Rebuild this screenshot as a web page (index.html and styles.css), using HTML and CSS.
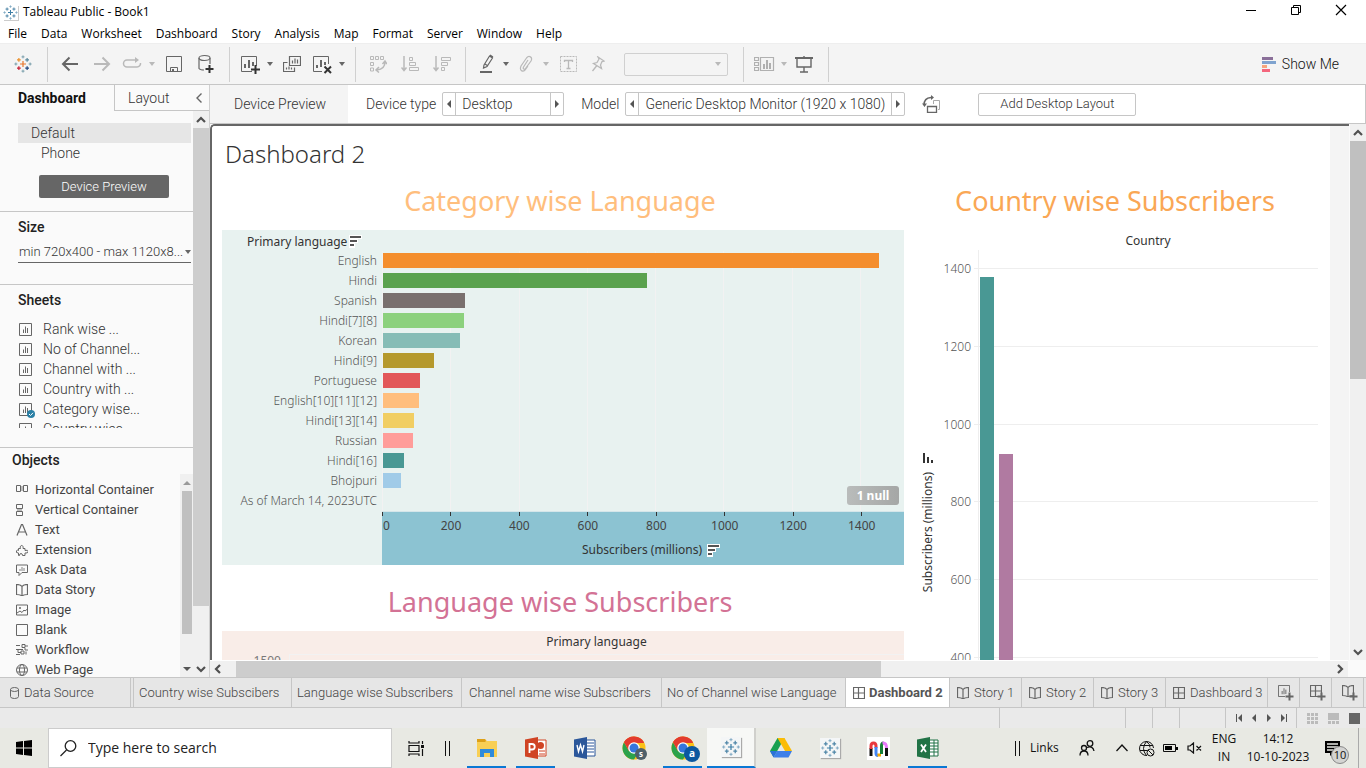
FILE: index.html
```html
<!DOCTYPE html>
<html lang="en">
<head>
<meta charset="utf-8">
<title>Tableau Public - Book1</title>
<link rel="stylesheet" href="styles.css">
</head>
<body>
<svg class="defs" aria-hidden="true">
  <symbol id="marks" viewBox="0 0 24 24">
    <g fill="none" stroke-width="1.6">
      <path class="m1" d="M12 8v8M8 12h8"/>
      <path class="m2" d="M6.500 4v5M4 6.500h5"/>
      <path class="m3" d="M17.500 4v5M15 6.500h5"/>
      <path class="m4" d="M6.500 15v5M4 17.500h5"/>
      <path class="m5" d="M17.500 15v5M15 17.500h5"/>
      <path class="m6" stroke-width="1.200" d="M12 0.500v4M10 2.500h4M12 19.500v4M10 21.500h4"/>
      <path class="m7" stroke-width="1.200" d="M2.500 10v4M0.500 12h4M21.500 10v4M19.500 12h4"/>
    </g>
  </symbol>
  <symbol id="sheet" viewBox="0 0 13 13"><path d="M.5.5h12v12H.500zM4.500 10V6.500M6.500 10V3.500M8.500 10V5" fill="none" stroke="currentColor"/></symbol>
  <symbol id="book" viewBox="0 0 12 12"><path d="M6 2.500C5 1 3 .5.500.500v10C3 10.500 5 11 6 12c1-1 3-1.500 5.500-1.500v-10C9 .5 7 1 6 2.500zM6 2.500V12" fill="none" stroke="currentColor" stroke-width="1.200"/></symbol>
  <symbol id="dash" viewBox="0 0 12 12"><path d="M.5.5h11v11H.500zM5.500.500v11M.5 6h11" fill="none" stroke="currentColor" stroke-width="1.200"/></symbol>
  <symbol id="sort" viewBox="0 0 13 13"><path d="M0 0h13v4H9v4H6v5H0z" fill="#fff"/><path d="M1 1h11v2H1zM1 5h7v2H1zM1 9h4v2H1z" fill="#555"/></symbol>
  <symbol id="chrome" viewBox="0 0 24 24">
    <circle cx="12" cy="12" r="11.500" fill="#fbc116"/><path d="M2 6.300A11.500 11.500 0 0 1 22 6.500L12 7z" fill="#e33b2e"/>
    <path d="M2 6.300A11.500 11.500 0 0 0 12 23.500l5-8.500-10 0z" fill="#2ba24c"/><path d="M2 6.300l5 8.700 5-8h10l-.3-.700A11.500 11.500 0 0 0 2 6.300z" fill="#e33b2e"/>
    <circle cx="12" cy="12" r="5.800" fill="#fff"/><circle cx="12" cy="12" r="4.500" fill="#3576dd"/>
  </symbol>
  <symbol id="up" viewBox="0 0 10 10"><path d="M1 7l4-4 4 4" fill="none" stroke="currentColor" stroke-width="2.200"/></symbol>
</svg>

<header class="titlebar">
  <svg class="app-logo blue" width="15" height="15"><use href="#marks"/></svg>
  <span class="app-name">Tableau Public - Book1</span>
  <div class="window-buttons">
    <button aria-label="Minimize"><svg width="12" height="12"><path d="M1 6.500h10" stroke="#000"/></svg></button>
    <button aria-label="Restore"><svg width="12" height="12" fill="none" stroke="#000"><path d="M1.500 3.500h7v7h-7zM3.500 3.500v-2h7v7h-2"/></svg></button>
    <button aria-label="Close"><svg width="12" height="12"><path d="M1 1l10 10M11 1L1 11" stroke="#000" stroke-width="1.200"/></svg></button>
  </div>
</header>
<nav class="menubar">
  <button>File</button><button>Data</button><button>Worksheet</button><button>Dashboard</button><button>Story</button><button>Analysis</button><button>Map</button><button>Format</button><button>Server</button><button>Window</button><button>Help</button>
</nav>

<div class="toolbar">
  <button class="tool logo-tool" aria-label="Start page"><svg class="multi" width="18" height="18"><use href="#marks"/></svg></button>
  <span class="rule"></span>
  <button class="tool wide" aria-label="Undo"><svg width="18" height="16" fill="none" stroke="#666" stroke-width="2"><path d="M17 8H2M8.500 1.500L2 8l6.500 6.500"/></svg></button>
  <button class="tool wide" aria-label="Redo"><svg width="18" height="16" fill="none" stroke="#b9b9b9" stroke-width="2"><path d="M1 8h15M9.500 1.500L16 8l-6.500 6.500"/></svg></button>
  <button class="tool" aria-label="Replay"><svg width="20" height="14" fill="none" stroke="#b9b9b9" stroke-width="1.500"><path d="M14 3H5a3.500 3.500 0 0 0 0 7h10a3.500 3.500 0 0 0 3.500-4"/><path d="M13 0l4 3-4 3z" fill="#b9b9b9" stroke="none"/></svg></button>
  <button class="caret pale" aria-label="Replay options"></button>
  <button class="tool wide" aria-label="Save"><svg width="16" height="16" fill="none" stroke="#666"><path d="M.5.500h15v15H.500zM4.500 15.500v-4h7v4"/><path d="M6 13h2v3H6z" fill="#666" stroke="none"/></svg></button>
  <button class="tool wide" aria-label="New data source"><svg width="16" height="20" fill="none" stroke="#666" stroke-width="1.200"><ellipse cx="6.500" cy="4" rx="5.500" ry="2.500"/><path d="M1 4v10.500q1 1.500 5 1.500M12 4v6"/><path d="M11.500 11v8M7.500 15h8" stroke="#333" stroke-width="2"/></svg></button>
  <span class="rule"></span>
  <button class="tool" aria-label="New worksheet"><svg width="20" height="20" fill="none" stroke="#666"><path d="M12 17.500H1.500v-15h15V12"/><path d="M5 14v-4M9 14V6M13 12V8" stroke-width="2"/><path d="M15.500 11v9M11 15.500h9" stroke="#333" stroke-width="2"/></svg></button>
  <button class="caret" aria-label="New options"></button>
  <button class="tool wide" aria-label="Duplicate"><svg width="18" height="18" fill="none" stroke="#666"><path d="M6.500 1.500h11v9h-11zM9.500 8.500v-3M12 8.500v-5M14.500 8.500v-4M4.500 7.500h-4v9h11v-4M3.500 14.500v-2M6 14.500v-3M8.500 14.500v-2" stroke-width="1.200"/></svg></button>
  <button class="tool" aria-label="Clear sheet"><svg width="20" height="20" fill="none" stroke="#666"><path d="M10 17.500H1.500v-15h15V10"/><path d="M5 14v-3M9 13V6M13 11V8" stroke-width="2"/><path d="M12.500 12.500l6.500 6.500M19 12.500l-6.500 6.500" stroke="#333" stroke-width="2"/></svg></button>
  <button class="caret" aria-label="Clear options"></button>
  <span class="rule"></span>
  <button class="tool wide" aria-label="Swap"><svg width="18" height="18" fill="none" stroke="#b9b9b9"><path d="M1.500 1.500h3v3h-3zM6.500 1.500h3v3h-3zM11.500 1.500h3v3h-3zM1.500 7.500h3v3h-3zM1.500 13h3v3h-3z"/><path d="M16 7q0 7-8 8M13.500 9L16 6l2 3M10 12l-3 3 3 2.500" stroke-width="1.500"/></svg></button>
  <button class="tool wide" aria-label="Sort ascending"><svg width="18" height="18" fill="none" stroke="#b9b9b9"><path d="M3 1v14M.5 12.500L3 15.500l2.500-3" stroke-width="1.500"/><path d="M8.500 2.500h3v3h-3zM8.500 7.500h6v3h-6zM8.500 12.500h9v3h-9z"/></svg></button>
  <button class="tool wide" aria-label="Sort descending"><svg width="18" height="18" fill="none" stroke="#b9b9b9"><path d="M3 1v14M.5 12.500L3 15.500l2.500-3" stroke-width="1.500"/><path d="M8.500 2.500h9v3h-9zM8.500 7.500h6v3h-6zM8.500 12.500h3v3h-3z"/></svg></button>
  <span class="rule"></span>
  <button class="tool" aria-label="Highlight"><svg width="16" height="20" fill="none" stroke="#666"><path d="M6 11L11.500 2l3 2L9 12.500l-3.500 1.500zM7 10l3 2M12 1l3 2" stroke-width="1.200"/><path d="M2 18h12" stroke-width="2"/></svg></button>
  <button class="caret" aria-label="Highlight options"></button>
  <button class="tool" aria-label="Group members"><svg width="16" height="18" fill="none" stroke="#b9b9b9" stroke-width="1.200"><path d="M10 5l-4.500 7c-1 2 1 3 2 1.500L13 6c2-4-2-6-4.500-3L3 11c-2 5 2 6 4 4l3-4"/></svg></button>
  <button class="caret pale" aria-label="Group options"></button>
  <button class="tool wide" aria-label="Show labels"><svg width="17" height="16" fill="none" stroke="#b9b9b9"><path d="M.5.500h16v15H.500z" stroke-dasharray="2 1"/><path d="M4.500 6V4.500h8V6M8.500 4.500v8M6.500 12.500h4" stroke-width="1.300"/></svg></button>
  <button class="tool" aria-label="Fix axes"><svg width="14" height="16" fill="none" stroke="#b9b9b9" stroke-width="1.300"><path d="M7 1l6 4-2 .5L9.500 9l1 3.500-8-5L6 6.500 8 3zM5.500 10l-4 5"/></svg></button>
  <div class="fit"><select aria-label="Fit" disabled><option></option></select></div>
  <span class="rule after-fit"></span>
  <button class="tool" aria-label="Show cards"><svg width="21" height="14" fill="none" stroke="#b0b0b0"><path d="M.5.500h4v3h-4zM.5 5.500h4v3h-4zM.5 10.500h4v3h-4zM6.500.500h13v13h-13z" stroke-width="1.200"/><path d="M10 12V7M13 12V3M16 12V6" stroke-width="2"/></svg></button>
  <button class="caret pale" aria-label="Card options"></button>
  <button class="tool" aria-label="Presentation"><svg width="18" height="17" fill="none" stroke="#666"><path d="M0 2h18" stroke-width="2"/><path d="M2 2v9h14V2M9 0v1M9 11v5M5 16h8" stroke-width="1.400"/></svg></button>
  <span class="rule last"></span>
  <button class="show-me"><svg width="14" height="15"><path fill="#8a6f99" d="M0 0h11v3H0z"/><path fill="#7fa3cf" d="M0 4h14v3H0z"/><path fill="#f5a57e" d="M0 8h5v3H0z"/><path fill="#f4667d" d="M0 12h8v3H0z"/></svg>Show Me</button>
</div>

<main class="workspace">
  <aside class="side">
    <div class="side-tabs">
      <button class="side-tab current">Dashboard</button>
      <button class="side-tab">Layout<svg width="8" height="12" fill="none" stroke="#666" stroke-width="1.400"><path d="M6.500 1.500L2 6l4.500 4.500"/></svg></button>
    </div>
    <div class="side-body">
      <div class="side-content">
        <section class="devices">
          <button class="device chosen">Default</button>
          <button class="device phone">Phone</button>
          <button class="preview-button">Device Preview</button>
        </section>
        <section class="size">
          <h2><label for="size">Size</label></h2>
          <select id="size"><option>min 720x400 - max 1120x8...</option></select>
        </section>
        <section class="sheets">
          <h2>Sheets</h2>
          <ul>
            <li><svg><use href="#sheet"/></svg>Rank wise ...</li>
            <li><svg><use href="#sheet"/></svg>No of Channel...</li>
            <li><svg><use href="#sheet"/></svg>Channel with ...</li>
            <li><svg><use href="#sheet"/></svg>Country with ...</li>
            <li class="used"><svg><use href="#sheet"/></svg><svg class="tick" viewBox="0 0 8 8"><circle cx="4" cy="4" r="4" fill="#2a7fa5"/><path d="M2 4l1.500 1.500L6 2.800" fill="none" stroke="#fff"/></svg>Category wise...</li>
            <li><svg><use href="#sheet"/></svg>Country wise...</li>
          </ul>
        </section>
        <section class="objects">
          <h2>Objects</h2>
          <div class="object-area">
            <ul>
              <li><svg viewBox="0 0 12 12"><path d="M.5 1.500h4v6h-4zM7.500 1.500h4v6h-4z" fill="none" stroke="#666"/><path d="M5 2h2v5H5z" fill="#bbb"/></svg>Horizontal Container</li>
              <li><svg viewBox="0 0 12 12"><path d="M.5.500h6v4h-6zM.5 7.500h6v4h-6z" fill="none" stroke="#666"/><path d="M1 5h5v2H1z" fill="#bbb"/></svg>Vertical Container</li>
              <li><svg viewBox="0 0 12 12"><path d="M1 11.500L5.500.500h1L11 11.500M3 8h6" fill="none" stroke="#666" stroke-width="1.200"/></svg>Text</li>
              <li><svg viewBox="0 0 12 12"><path d="M2.500 4.500h2C3 1 8 0 7 4.500h2v2q3-1 3 1T9 9v2.500H6.500q0-2-1.500-2t-1.500 2h-1V9Q-.5 9 .5 7t2-.5z" fill="none" stroke="#666"/></svg>Extension</li>
              <li><svg viewBox="0 0 12 12"><path d="M.5 1h11v7.500H6l-3 3v-3H.500z" fill="none" stroke="#666"/><path d="M4 7V5M6 7V3M8 7V4" stroke="#aaa" stroke-width="1.500"/></svg>Ask Data</li>
              <li><svg><use href="#book"/></svg>Data Story</li>
              <li><svg viewBox="0 0 12 12"><path d="M.5 1h11v10H.500zM1 9l3-2 2 1.500L8 6l1 1 2.500-2" fill="none" stroke="#666"/><circle cx="4" cy="4" r="1" fill="#666"/></svg>Image</li>
              <li><svg viewBox="0 0 12 12"><path d="M.5.500h11v11H.500z" fill="none" stroke="#666"/></svg>Blank</li>
              <li><svg viewBox="0 0 12 12"><path d="M0 1.500h4M6 .5h3v3H6zM9 2h3M0 5.500h7M9 4v2h3M2 5.500v3h3M5 7h3v3H5zM10 7.500v3M0 10.500h4" fill="none" stroke="#666"/></svg>Workflow</li>
              <li><svg viewBox="0 0 12 12"><g fill="none" stroke="#666"><circle cx="6" cy="6" r="5.500"/><ellipse cx="6" cy="6" rx="2.500" ry="5.500"/><path d="M1 4h10M1 8h10"/></g></svg>Web Page</li>
            </ul>
            <div class="mini-scroll"><i class="tri up"></i><span></span><i class="tri down"></i></div>
          </div>
        </section>
      </div>
      <div class="vscroll side-scroll"><svg><use href="#up"/></svg><span></span><svg class="flip"><use href="#up"/></svg></div>
    </div>
  </aside>

  <div class="stage">
    <div class="device-bar">
      <span class="device-title">Device Preview</span>
      <label for="device-type">Device type</label>
      <div class="stepper short"><button aria-label="Previous type"><i class="tri left"></i></button><select id="device-type"><option>Desktop</option></select><button aria-label="Next type"><i class="tri right"></i></button></div>
      <label for="model">Model</label>
      <div class="stepper long"><button aria-label="Previous model"><i class="tri left"></i></button><select id="model"><option>Generic Desktop Monitor (1920 x 1080)</option></select><button aria-label="Next model"><i class="tri right"></i></button></div>
      <button class="rotate" aria-label="Rotate"><svg width="18" height="18" fill="none" stroke="#666"><path d="M2 10q0-7 7-7.500" stroke-width="1.500"/><path d="M9 0l3 2.500L9 5zM0 8.500h5L2.500 12z" fill="#666" stroke="none"/><path d="M5.500 11.500h9v6h-9z" stroke-width="1.300"/><path d="M11.500 9V5.500h6v9H16" stroke="#aaa"/></svg></button>
      <button class="add-layout">Add Desktop Layout</button>
    </div>

    <div class="canvas-row">
      <div class="canvas">
        <div class="dashboard">
          <h1>Dashboard 2</h1>
          <div class="dash-grid">
            <div class="left-column">
              <h2 class="viz-title peach">Category wise Language</h2>
              <div class="category-chart">
                <div class="field-name">Primary language <svg width="13" height="13"><use href="#sort"/></svg></div>
                <div class="rows">
                  <div class="names"><span>English</span><span>Hindi</span><span>Spanish</span><span>Hindi[7][8]</span><span>Korean</span><span>Hindi[9]</span><span>Portuguese</span><span>English[10][11][12]</span><span>Hindi[13][14]</span><span>Russian</span><span>Hindi[16]</span><span>Bhojpuri</span><span>As of March 14, 2023UTC</span></div>
                  <div class="bars">
                    <i style="width:95.2%;background:#f48e2d"></i><i style="width:50.6%;background:#5aa24e"></i><i style="width:15.8%;background:#79706e"></i><i style="width:15.6%;background:#8cd17d"></i><i style="width:14.8%;background:#86bcb6"></i><i style="width:9.8%;background:#b5992d"></i><i style="width:7.1%;background:#e25759"></i><i style="width:7%;background:#ffbe7d"></i><i style="width:6%;background:#f1ce63"></i><i style="width:5.800%;background:#ff9d9a"></i><i style="width:4.100%;background:#499894"></i><i style="width:3.500%;background:#a0cbe8"></i>
                    <button class="null-badge">1 null</button>
                  </div>
                </div>
                <div class="axis">
                  <div class="ticks"><span>0</span><span>200</span><span>400</span><span>600</span><span>800</span><span>1000</span><span>1200</span><span>1400</span></div>
                  <div class="axis-name">Subscribers (millions) <svg width="13" height="13"><use href="#sort"/></svg></div>
                </div>
              </div>
              <h2 class="viz-title pink">Language wise Subscribers</h2>
              <div class="language-chart">
                <div class="language-field">Primary language</div>
                <div class="language-plot"><span>1500</span><i></i></div>
              </div>
            </div>
            <div class="right-column">
              <h2 class="viz-title orange">Country wise Subscribers</h2>
              <div class="country-chart">
                <div class="vertical-name"><span>Subscribers (millions)</span><svg width="11" height="11"><path d="M0 0h2v10H0zM4 4h2v6H4zM8 7h2v3H8z" fill="#333"/></svg></div>
                <div class="country-body">
                  <div class="country-name">Country</div>
                  <div class="country-plot">
                    <div class="levels"><span>1400</span><span>1200</span><span>1000</span><span>800</span><span>600</span><span>400</span></div>
                    <div class="columns"><div class="lines"><i></i><i></i><i></i><i></i><i></i><i></i></div><b class="india"></b><b class="usa"></b></div>
                  </div>
                </div>
              </div>
            </div>
          </div>
        </div>
      </div>
      <div class="vscroll page-scroll"><svg><use href="#up"/></svg><span></span><svg class="flip"><use href="#up"/></svg></div>
    </div>
    <div class="hscroll"><svg class="ccw"><use href="#up"/></svg><span></span><svg class="cw"><use href="#up"/></svg></div>
  </div>
</main>

<nav class="sheet-tabs">
  <button class="source"><svg width="9" height="12" fill="none" stroke="#666"><ellipse cx="4.500" cy="2.500" rx="4" ry="2"/><path d="M.5 2.500v7q0 2 4 2t4-2v-7"/></svg>Data Source</button>
  <button class="t1">Country wise Subscibers</button><button class="t2">Language wise Subscribers</button><button class="t3">Channel name wise Subscribers</button><button class="t4">No of Channel wise Language</button>
  <button class="active"><svg width="12" height="12"><use href="#dash"/></svg>Dashboard 2</button>
  <button class="story"><svg width="12" height="12"><use href="#book"/></svg>Story 1</button><button class="story"><svg width="12" height="12"><use href="#book"/></svg>Story 2</button><button class="story"><svg width="12" height="12"><use href="#book"/></svg>Story 3</button>
  <button class="d3"><svg width="12" height="12"><use href="#dash"/></svg>Dashboard 3</button>
  <button class="new" aria-label="New worksheet"><svg width="16" height="16"><use href="#sheet" width="12" height="12"/><path d="M7 11h9M11.500 7v9" stroke="#e6e6e6" stroke-width="4"/><path d="M7.500 11.500h8M11.500 7.500v8" stroke="#666" stroke-width="2"/></svg></button>
  <button class="new" aria-label="New dashboard"><svg width="16" height="16"><use href="#dash" width="12" height="12"/><path d="M7.500 11.500h8M11.500 7.500v8" stroke="#666" stroke-width="2"/></svg></button>
  <button class="new" aria-label="New story"><svg width="16" height="16"><use href="#book" width="12" height="12"/><path d="M7.500 11.500h8M11.500 7.500v8" stroke="#666" stroke-width="2"/></svg></button>
</nav>
<div class="statusbar">
  <span class="cell c1"></span><span class="cell c4"></span><span class="cell c2"></span><span class="cell c2"></span><span class="cell c3"></span>
  <div class="cell pager">
    <button aria-label="First"><svg width="8" height="8" fill="#555"><path d="M1 0h1v8H1zM7 0v8L3 4z"/></svg></button><button aria-label="Previous"><svg width="8" height="8" fill="#555"><path d="M6 0v8L2 4z"/></svg></button><button aria-label="Next"><svg width="8" height="8" fill="#555"><path d="M2 0v8l4-4z"/></svg></button><button aria-label="Last"><svg width="8" height="8" fill="#555"><path d="M6 0h1v8H6zM1 0v8l4-4z"/></svg></button>
  </div>
  <div class="views">
    <button aria-label="Grid view"><svg width="11" height="11" fill="#bbb"><path d="M0 0h3v3H0zM4 0h3v3H4zM8 0h3v3H8zM0 4h3v3H0zM4 4h3v3H4zM8 4h3v3H8zM0 8h3v3H0zM4 8h3v3H4zM8 8h3v3H8z"/></svg></button><button aria-label="Filmstrip"><svg width="11" height="11" fill="#bbb"><path d="M0 0h11v7H0zM0 8h3v3H0zM4 8h3v3H4zM8 8h3v3H8z"/></svg></button><button aria-label="Tabs"><svg width="11" height="11"><path d="M0 0h11v11H0z" fill="#666"/></svg></button>
  </div>
</div>

<footer class="taskbar">
  <button class="start" aria-label="Start"><svg width="16" height="16"><path d="M0 2l7-1v6.500H0zM8 1l8-1v7.500H8zM0 8.500h7V15l-7-1zM8 8.500h8V16l-8-1z"/></svg></button>
  <div class="search"><svg width="17" height="17" fill="none" stroke="#222" stroke-width="1.300"><circle cx="10.500" cy="6" r="5.300"/><path d="M6.500 10L.5 16"/></svg><input type="text" aria-label="Search" value="Type here to search"></div>
  <button class="task-view" aria-label="Task view"><svg width="17" height="15" fill="none" stroke="#111" stroke-width="1.200"><path d="M1 0v2h10V0M1 4.500h10v6H1zM1 15v-2h10v2M14.500 0v3M14.500 8v7"/><path d="M13 4h3v3h-3z" fill="#111" stroke="none"/></svg></button>
  <i class="grip"></i>
  <div class="apps">
    <button class="app running" aria-label="File Explorer"><svg width="22" height="20"><path d="M1 1h8l2 2h10v16H1z" fill="#f8cf55"/><path d="M1 1h8l1 2-1 1H1z" fill="#dda018"/><path d="M4 11h14v8h-4v-4H8v4H4z" fill="#2f8bdb"/></svg></button>
    <button class="app running" aria-label="PowerPoint"><svg width="22" height="22"><path d="M12 3h9v16h-9z" fill="#fff" stroke="#d04424"/><path d="M14 14h6M14 17h6" stroke="#d04424"/><circle cx="15.500" cy="8.500" r="3.500" fill="#d04424"/><path d="M0 2.500L13 0v22L0 19.500z" fill="#d04424"/><path d="M4.500 16V7h2.500a2.500 2.500 0 0 1 0 5.500H5" fill="none" stroke="#fff" stroke-width="1.800"/></svg></button>
    <button class="app" aria-label="Word"><svg width="22" height="22"><path d="M12 3h9v16h-9z" fill="#fff" stroke="#2b579a"/><path d="M13 6h7M13 9h7M13 12h7M13 15h7" stroke="#2b579a"/><path d="M0 2.500L13 0v22L0 19.500z" fill="#2b579a"/><path d="M3 8l1.500 6.500L6.500 8l2 6.500L10 8" fill="none" stroke="#fff" stroke-width="1.400"/></svg></button>
    <button class="app" aria-label="Chrome"><svg width="24" height="24"><use href="#chrome"/></svg><span class="profile gray">s</span></button>
    <button class="app running" aria-label="Chrome"><svg width="24" height="24"><use href="#chrome"/></svg><span class="profile navy">a</span></button>
    <button class="app front" aria-label="Tableau"><svg class="tile blue" viewBox="-1 -1 26 26"><use href="#marks" width="24" height="24"/></svg></button>
    <button class="app" aria-label="Drive"><svg width="22" height="20"><path d="M7.500 0h7L7.500 12.500 3.500 19 0 13z" fill="#18a050"/><path d="M7.500 0h7L22 13h-7z" fill="#fbbc05"/><path d="M0 13h7l-3.500 6.500z" fill="#2b72d8"/><path d="M7 13h15l-3.500 6.500h-15z" fill="#3d7fe8"/></svg></button>
    <button class="app" aria-label="Tableau"><svg class="tile blue" viewBox="-1 -1 26 26"><use href="#marks" width="24" height="24"/></svg></button>
    <button class="app" aria-label="Magnet"><svg width="23" height="23"><path d="M0 0h23v23H0z" fill="#fff"/><g fill="none" stroke-width="3"><path d="M4 19V11" stroke="#111"/><path d="M4 12V9q0-3 2.500-3T9 9v2" stroke="#e8383f"/><path d="M9 10v6q0 2.500 2 2.500" stroke="#4285f4"/><path d="M10.500 18h3.500" stroke="#f9ab00"/><path d="M14.500 17V9q0-3 2-3" stroke="#188038"/><path d="M15.500 6q4-.5 4 5" stroke="#e879f9"/><path d="M19.500 11v8" stroke="#111"/></g></svg></button>
    <button class="app running" aria-label="Excel"><svg width="22" height="22"><path d="M12 3h9v16h-9z" fill="#fff" stroke="#217346"/><path d="M13 6h8M13 9h8M13 12h8M13 15h8M17 3v16" stroke="#217346"/><path d="M0 2.500L13 0v22L0 19.500z" fill="#217346"/><path d="M4 7.500l5 7.500M9 7.500L4 15" stroke="#fff" stroke-width="1.800"/></svg></button>
  </div>
  <div class="tray">
    <i class="grip"></i><span class="links">Links</span>
    <button class="t-people" aria-label="People"><svg width="16" height="16" fill="none" stroke="#111" stroke-width="1.300"><circle cx="11" cy="3.500" r="2.800"/><circle cx="5" cy="8" r="2.500"/><path d="M1 15.500q0-4.500 4-4.500t4 4.500M8 7.500q6-2 7 3.500"/></svg></button>
    <button aria-label="Hidden icons"><svg width="12" height="8" fill="none" stroke="#111" stroke-width="1.300"><path d="M.5 7L6 1l5.500 6"/></svg></button>
    <button aria-label="Network"><svg width="17" height="17" fill="none" stroke="#111"><path d="M9 15.500A7 7 0 1 1 15.500 8M8.500 1.500q-6 7 0 14M8.500 1.500q4 3 3.500 6M2 5.500h13M2 10.500h7"/><circle cx="12.500" cy="12.500" r="3.500" fill="#e8e9e3"/><path d="M10 10l5 5"/></svg></button>
    <button aria-label="Battery"><svg width="15" height="10"><path d="M.5 1.500h12v7H.500z" fill="none" stroke="#111"/><path d="M2 3h7v4H2zM13 4h2v3h-2z"/></svg></button>
    <button aria-label="Volume"><svg width="15" height="12" fill="none" stroke="#111"><path d="M1 4h2l3.500-3v10L3 8H1zM9.500 4l4.500 4.500M14 4L9.500 8.500" stroke-width="1.200"/></svg></button>
    <button class="lang">ENG<br>IN</button>
    <button class="clock">14:12<br>10-10-2023</button>
    <button class="notes" aria-label="Notifications"><svg width="18" height="17"><path d="M1 1h15v12H9l-3 3v-3H1z"/><path d="M3 4h11M3 7h11M3 10h6" stroke="#e8e9e3" stroke-width="1.300"/></svg><span>10</span></button>
    <i class="desktop-edge"></i>
  </div>
</footer>
</body>
</html>
```
FILE: styles.css
```css
:root {
  --ui: Roboto, "Open Sans", sans-serif;
  --sys: "Open Sans", "Noto Sans", sans-serif;
  --viz: "Noto Sans", "Open Sans", sans-serif;
  --line: #c6c6c6;
}
* { box-sizing: border-box; }
body {
  margin: 0;
  height: 100vh;
  display: flex;
  flex-direction: column;
  overflow: hidden;
  background: #fff;
  color: #333;
  font: 13px/20px var(--ui);
}
button, select, input { font: inherit; color: inherit; border: 0; padding: 0; margin: 0; background: none; border-radius: 0; }
select { appearance: none; opacity: 1; }
h1, h2, ul { margin: 0; padding: 0; }
h1, h2 { font-weight: 400; }
ul { list-style: none; }
svg { display: block; flex: none; }
.defs { position: absolute; width: 0; height: 0; }

.m1 { stroke: var(--m1, #3d7ea6); }
.m2 { stroke: var(--m2, #4f86a8); }
.m3 { stroke: var(--m3, #4f86a8); }
.m4 { stroke: var(--m4, #4f86a8); }
.m5 { stroke: var(--m5, #4f86a8); }
.m6, .m7 { stroke: var(--m6, #7aa5c0); }
.multi { --m1: #e8762c; --m2: #eb912c; --m3: #59879b; --m4: #c72037; --m5: #1f447e; --m6: #7199a6; }

/* Title and menu */
.titlebar { display: flex; align-items: center; height: 24px; padding-left: 3px; gap: 5px; font: 12px/20px var(--sys); color: #000; }
.app-logo { box-shadow: 1px 1px 0 #ccc; }
.window-buttons { margin: 0 3px 4px auto; display: flex; height: 20px; }
.window-buttons button { width: 45px; display: grid; place-items: center; }
.menubar { display: flex; gap: 14px; height: 19px; padding-left: 8px; font: 12px/19px var(--sys); color: #000; }

/* Toolbar */
.toolbar { display: flex; align-items: center; height: 42px; background: #f4f4f4; border-bottom: 1px solid var(--line); border-top: 1px solid #eee; }
.tool { width: 28px; height: 28px; display: grid; place-items: center; flex: none; }
.tool.wide { width: 32px; }
.logo-tool { width: 40px; padding-left: 6px; }
.rule { width: 1px; height: 35px; background: #d0d0d0; margin: 0 6px 0 7px; flex: none; }
.rule.after-fit { margin-left: 15px; }
.rule.last { margin-left: 10px; }
.caret { width: 12px; height: 20px; display: grid; place-items: center; flex: none; }
.caret::before, .size::after, .fit::after { content: ""; border: 3px solid transparent; border-top: 4px solid #666; border-bottom: 0; }
.caret.pale::before, .fit::after { border-top-color: #b9b9b9; }
.fit { width: 104px; height: 23px; margin-left: 12px; padding-right: 6px; display: flex; align-items: center; border: 1px solid #d0d0d0; border-radius: 2px; }
.fit select { flex: 1; min-width: 0; height: 21px; }
.show-me { margin-left: auto; margin-right: 27px; display: flex; align-items: center; gap: 6px; font-size: 14px; font-weight: 300; color: #111; }

.workspace { flex: 1; min-height: 0; display: flex; }

/* Side panel */
.side { width: 210px; flex: none; display: flex; flex-direction: column; background: #fafafa; border-right: 1px solid #d0d0d0; font-weight: 300; }
.side-tabs { display: flex; height: 26px; flex: none; }
.side-tab { flex: 1; display: flex; align-items: center; justify-content: space-between; padding: 0 6px 0 13px; font-size: 14px; border-left: 1px solid var(--line); border-bottom: 1px solid var(--line); }
.side-tab.current { flex: 0 0 114px; padding-left: 18px; font-weight: 700; font-size: 14px; color: #111; border: 0; }
.side-body { flex: 1; min-height: 0; display: flex; }
.side-content { flex: 1; min-width: 0; display: flex; flex-direction: column; overflow: hidden; font-size: 14px; }
.side h2 { font-size: 14px; font-weight: 500; color: #222; line-height: 20px; }
.devices { display: flex; flex-direction: column; padding: 12px 2px 13px 18px; border-bottom: 1px solid var(--line); }
.device { text-align: left; padding-left: 13px; height: 20px; line-height: 20px; }
.device.chosen { background: #e6e6e6; }
.device.phone { padding-left: 23px; }
.preview-button { margin: 12px 22px 0 21px; height: 23px; border-radius: 2px; background: #666; color: #fff; font-size: 13px; }
.size { position: relative; padding: 5px 2px 21px 18px; border-bottom: 1px solid var(--line); }
.size select { width: 100%; height: 22px; margin-top: 4px; padding-left: 1px; border-bottom: 1px solid #666; font-size: 13px; display: block; }
.size::after { position: absolute; right: 2px; top: 38px; }
.sheets { padding: 5px 2px 0 18px; height: 144px; flex: none; overflow: hidden; }
.sheets ul { margin-top: 9px; height: 109px; overflow: hidden; }
.sheets li { display: flex; align-items: center; height: 20px; gap: 11px; padding-left: 1px; position: relative; }
.sheets li svg { width: 13px; height: 13px; color: #666; }
.sheets li .tick { position: absolute; width: 8px; height: 8px; left: 9px; top: 11px; }
.objects { border-top: 1px solid var(--line); margin-top: 18px; padding-left: 12px; flex: 1; min-height: 0; display: flex; flex-direction: column; }
.objects h2 { margin-top: 2px; }
.object-area { flex: 1; min-height: 0; display: flex; margin-top: 4px; }
.object-area ul { flex: 1; padding-top: 6px; overflow: hidden; font-size: 13px; font-weight: 400; color: #444; }
.object-area li { display: flex; align-items: center; gap: 7px; height: 20px; padding-left: 4px; white-space: nowrap; }
.object-area li svg { width: 12px; height: 12px; color: #666; }
.mini-scroll { width: 13px; background: #f0f0f0; display: flex; flex-direction: column; align-items: center; padding: 7px 1px 6px 2px; gap: 6px; }
.mini-scroll span { flex: 0 0 143px; width: 100%; background: #c0c0c0; }
.mini-scroll .down { margin-top: auto; }
.tri { display: block; width: 0; height: 0; border: 4px solid transparent; }
.tri.up { border-top: 0; border-bottom-color: #999; }
.tri.down { border-bottom: 0; border-top-color: #555; }
.tri.left { border-left: 0; border-right-color: #555; }
.tri.right { border-right: 0; border-left-color: #555; }

.vscroll { width: 16px; flex: none; background: #f0f0f0; display: flex; flex-direction: column; align-items: center; padding: 4px 0 3px; }
.vscroll svg, .hscroll svg { width: 10px; height: 10px; color: #505050; }
.vscroll span { width: 100%; background: #cdcdcd; margin-top: 3px; }
.vscroll .flip { margin-top: auto; transform: rotate(180deg); }
.side-scroll span { height: 478px; }
.page-scroll span { height: 238px; background: #c0c0c0; }
.hscroll { display: flex; align-items: center; height: 17px; margin-right: 18px; padding: 0 3px; background: #f0f0f0; border-top: 1px solid #fff; }
.hscroll span { width: 57%; height: 100%; margin-left: 13px; background: #cdcdcd; }
.ccw { transform: rotate(-90deg); }
.cw { transform: rotate(90deg); margin-left: auto; }

/* Stage */
.stage { flex: 1; min-width: 0; display: flex; flex-direction: column; background: #fafafa; }
.device-bar { display: flex; align-items: center; height: 39px; flex: none; background: #fff; border-bottom: 1px solid var(--line); border-right: 1px solid var(--line); font-size: 14px; font-weight: 300; }
.device-title { align-self: stretch; display: flex; align-items: center; width: 138px; padding-left: 24px; background: #f4f4f4; margin-right: 18px; }
.stepper { display: flex; height: 24px; border: 1px solid var(--line); border-radius: 2px; margin: 0 17px 0 6px; }
.stepper button { width: 12px; display: grid; place-items: center; flex: none; }
.stepper select { flex: 1; min-width: 0; padding-left: 6px; border: solid var(--line); border-width: 0 1px; }
.stepper.short { width: 122px; }
.stepper.long { width: 280px; }
.rotate { width: 20px; }
.add-layout { width: 158px; height: 23px; margin-left: 36px; border: 1px solid var(--line); border-radius: 2px; font-size: 13px; }

.canvas-row { flex: 1; min-height: 0; display: flex; }
.canvas { flex: 1; min-width: 0; overflow: hidden; background: #f4f4f4; border: 2px solid #666; border-width: 2px 0 0 2px; border-radius: 5px 0 0 0; padding-right: 19px; margin-right: 1px; }
.dashboard { background: #fff; padding: 10px 12px 0 10px; color: #333; font-family: var(--viz); }
.dashboard h1 { font-size: 24px; line-height: 36px; font-weight: 300; padding-left: 3px; }
.dash-grid { display: grid; grid-template-columns: minmax(0, 682fr) minmax(0, 414fr); }
.viz-title { font-size: 27px; line-height: 36px; text-align: center; white-space: nowrap; }
.left-column .viz-title { padding: 11px 6px 11px 0; }
.left-column .pink { padding-top: 19px; }
.right-column .viz-title { padding: 11px 0 11px 8px; }
.peach { color: #ffbe7d; }
.orange { color: #faa755; }
.pink { color: #d37295; }

.category-chart { display: grid; grid-template-columns: 160px 1fr; grid-template-rows: 21px 260px 54px; background: #e8f2f0; font-size: 12px; }
.field-name { grid-column: 1 / 3; padding: 2px 0 0 25px; line-height: 20px; display: flex; align-items: center; gap: 2px; }
.rows { grid-column: 1 / 3; display: grid; grid-template-columns: subgrid; }
.names { display: flex; flex-direction: column; text-align: right; padding-right: 5px; color: #555; font-weight: 300; white-space: nowrap; }
.names span { height: 20px; line-height: 20px; }
.bars { position: relative; padding-top: 2px; border-left: 1px solid #f2f2f2; background: repeating-linear-gradient(90deg, transparent 0 calc(13.1% - 1px), #f2f2f2 calc(13.1% - 1px) 13.1%); }
.bars i { display: block; height: 15px; margin-bottom: 5px; }
.null-badge { position: absolute; right: 5px; bottom: 6px; width: 52px; height: 19px; border-radius: 3px; background: linear-gradient(90deg, #b9bcbb, #a5a7a6); color: #fff; font-weight: 700; line-height: 18px; }
.axis { grid-column: 2; background: #8cc3d2; border-top: 1px solid #d5e6ea; }
.ticks { display: flex; justify-content: space-between; width: 92%; color: #444; }
.ticks span { width: 1px; display: flex; flex-direction: column; align-items: center; line-height: 20px; }
.ticks span::before { content: ""; width: 1px; height: 4px; flex: none; background: #333; }
.ticks span:first-child { align-items: flex-start; text-indent: 1px; }
.axis-name { display: flex; align-items: center; justify-content: center; gap: 5px; line-height: 18px; padding: 5px 0 0 16px; }

.language-chart { background: #f9ede8; font-size: 12px; }
.language-field { line-height: 20px; text-align: center; padding-left: 67px; padding-top: 1px; }
.language-plot { display: flex; align-items: flex-start; color: #787878; height: 300px; }
.language-plot span { width: 59px; text-align: right; line-height: 18px; }
.language-plot i { flex: 1; border-left: 1px solid #f2f2f2; border-top: 1px solid #f2f2f2; align-self: stretch; margin: 2px 0 0 8px; }

.country-chart { display: flex; font-size: 12px; height: 480px; padding-left: 16px; }
.vertical-name { width: 16px; height: 362px; display: flex; flex-direction: column-reverse; align-items: center; gap: 8px; white-space: nowrap; }
.vertical-name span { writing-mode: vertical-rl; transform: rotate(180deg); line-height: 16px; }
.country-body { flex: 1; }
.country-name { line-height: 22px; height: 20px; text-align: center; padding-left: 42px; }
.country-plot { display: flex; }
.levels, .lines { display: flex; flex-direction: column; justify-content: space-between; }
.levels { width: 35px; height: 409px; margin: 9px 7px 0 0; text-align: right; color: #555; font-weight: 300; line-height: 20px; }
.columns { position: relative; flex: 1; height: 470px; border-left: 1px solid #eee; }
.lines { height: 390px; margin: 18px 0 0 -5px; }
.lines i { height: 1px; background: #eee; }
.columns b { position: absolute; bottom: 0; width: 14px; }
.india { left: 1px; top: 27px; background: #499894; }
.usa { left: 20px; top: 204px; background: #b07aa1; }

/* Sheet tabs */
.sheet-tabs { display: flex; height: 31px; background: #e6e6e6; border-top: 1px solid var(--line); border-bottom: 1px solid var(--line); color: #444; font-weight: 300; }
.sheet-tabs button { display: flex; align-items: center; gap: 5px; padding: 0 5px 0 7px; border-right: 1px solid var(--line); white-space: nowrap; flex: none; }
.sheet-tabs svg { color: #666; }
.sheet-tabs .source { width: 131px; padding-left: 10px; margin-right: 2px; }
.sheet-tabs .t1 { width: 159px; border-left: 1px solid var(--line); padding-left: 5px; }
.sheet-tabs .t2 { width: 170px; padding-left: 5px; }
.sheet-tabs .t3 { width: 200px; }
.sheet-tabs .t4 { width: 184px; padding-left: 5px; }
.sheet-tabs .active { width: 104px; gap: 4px; background: #fff; font-weight: 700; color: #555; }
.sheet-tabs .story { width: 72px; }
.sheet-tabs .d3 { width: 102px; }
.sheet-tabs .new { width: 32px; padding: 0 0 0 10px; }

.statusbar { display: flex; height: 20px; background: #eaeaea; }
.cell { border-right: 1px solid var(--line); }
.c1 { flex: 1; }
.c2 { width: 27px; }
.c3 { width: 46px; }
.c4 { width: 126px; }
.pager { display: flex; align-items: center; justify-content: space-between; width: 71px; padding: 0 6px 0 9px; }
.pager button { width: 10px; }
.views { width: 69px; display: flex; align-items: center; justify-content: space-between; padding: 0 6px 0 10px; }

/* Taskbar */
.taskbar { display: flex; align-items: center; height: 40px; background: #e8e9e3; color: #111; font-family: var(--sys); }
.start { width: 48px; height: 40px; display: grid; place-items: center; }
.search { width: 344px; height: 40px; display: flex; align-items: center; gap: 11px; padding-left: 11px; background: #fff; border: 1px solid #ccc; }
.search input { flex: 1; min-width: 0; font-size: 14px; color: #222; outline: 0; }
.task-view { width: 34px; margin-left: 7px; display: grid; place-items: center; }
.grip { width: 5px; height: 15px; border: solid #111; border-width: 0 1px; margin-left: 12px; }
.apps { display: flex; margin-left: 12px; }
.app { position: relative; width: 49px; height: 40px; display: grid; place-items: center; }
.app.running::after { content: ""; position: absolute; left: 5px; right: 5px; bottom: 0; height: 2px; background: #0a78d4; }
.app.front { background: #f7f8f6; border-bottom: 2px solid #0a78d4; border-right: 2px solid #d0d0cc; }
.tile { width: 20px; height: 20px; background: #f4f6f7; box-shadow: 1px 1px 1px #aaa; }
.profile { position: absolute; left: 26px; top: 20px; border-radius: 50%; color: #fff; font: 700 8px/12px var(--sys); width: 12px; height: 12px; text-align: center; }
.profile.gray { background: #4f6069; }
.profile.navy { background: #0b57a0; width: 16px; height: 16px; top: 18px; font-size: 10px; line-height: 15px; }
.tray { margin-left: auto; display: flex; align-items: center; font-size: 12px; line-height: 18px; }
.links { margin-left: 10px; width: 28px; }
.tray button { width: 24px; height: 36px; display: grid; place-items: center; text-align: center; }
.tray .t-people { width: 35px; margin: 0 6px 0 11px; }
.tray .lang { width: 36px; display: block; }
.tray .clock { width: 72px; display: block; }
.tray .notes { position: relative; width: 38px; }
.notes span { position: absolute; left: 17px; top: 16px; width: 18px; height: 18px; border: 1px solid #888; border-radius: 50%; background: #d4d4d2; font: 11px/16px var(--sys); }
.desktop-edge { width: 8px; height: 40px; margin-left: 6px; border-left: 1px solid #aaa; }
```
